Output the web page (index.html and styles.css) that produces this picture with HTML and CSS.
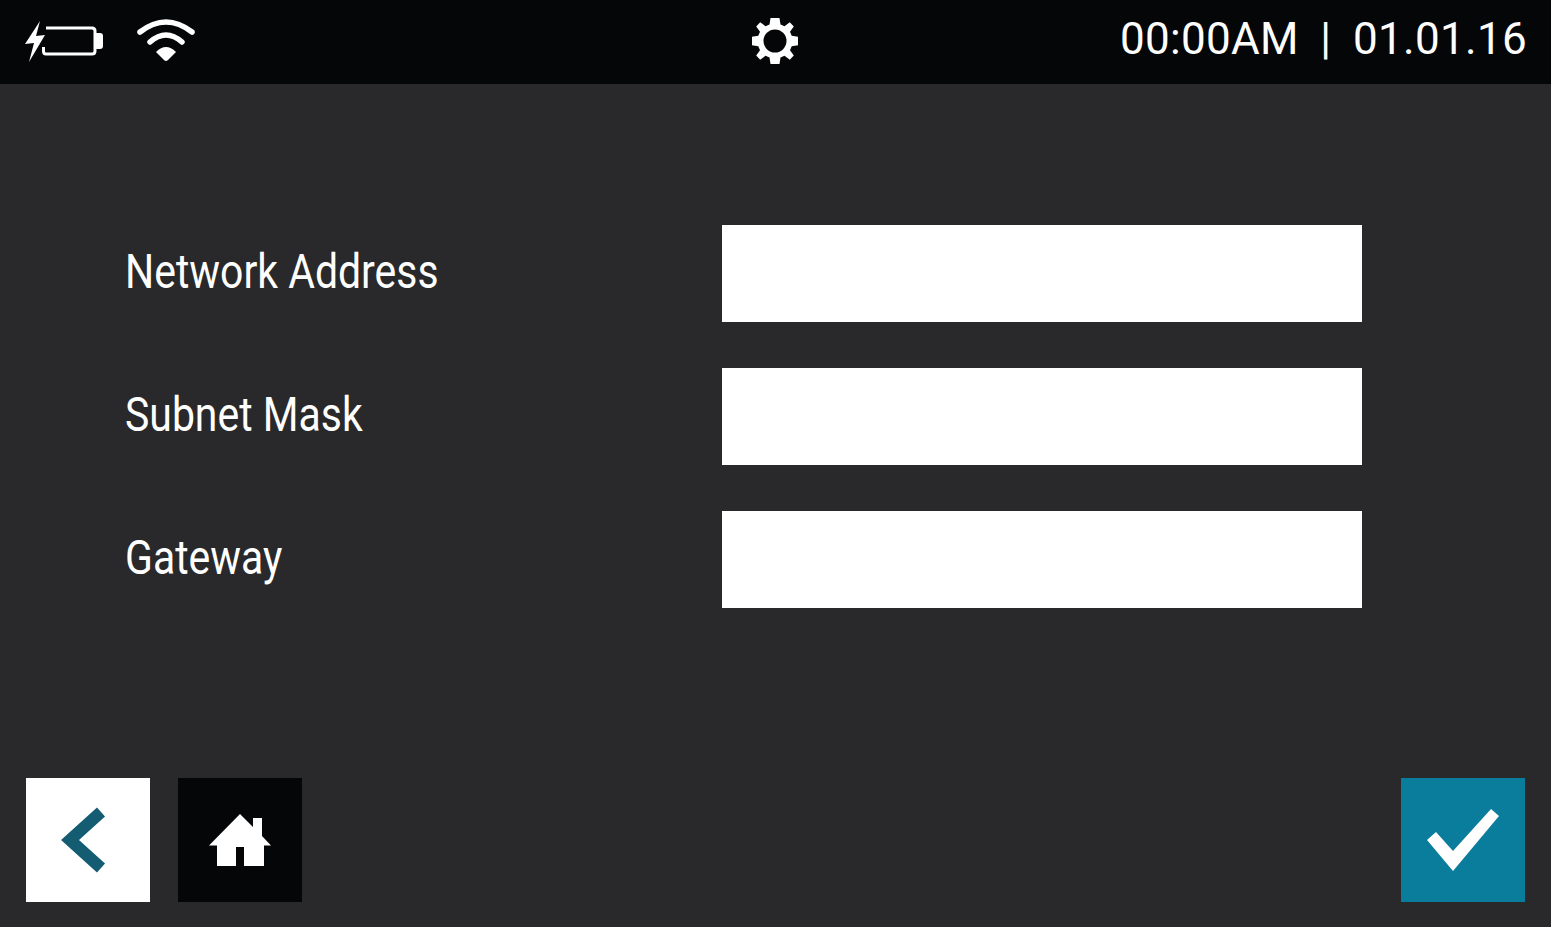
FILE: index.html
```html
<!DOCTYPE html>
<html lang="en">
<head>
    <meta charset="UTF-8">
    <meta name="viewport" content="width=device-width, initial-scale=1.0">
    <title>Network settings</title>
    <link rel="stylesheet" href="styles.css">
</head>
<body>
    <header class="topbar">
        <div class="status">
            <svg class="icon-battery" width="80" height="44" viewBox="0 0 80 44">
                <path d="M15 1 L0 24 L9 23 L4 42 L20 15 L11 16 Z" fill="#fff"/>
                <path d="M21 8 H67 Q70 8 70 11 V31 Q70 34 67 34 H21 Q18.500 34 18.500 31 V27" fill="none" stroke="#fff" stroke-width="3"/>
                <path d="M71 13 H75 Q78 13 78 16 V26 Q78 29 75 29 H71 Z" fill="#fff"/>
            </svg>
            <svg class="icon-wifi" width="60" height="44" viewBox="0 0 60 44">
                <path d="M3 14 Q29 -6 55 14" fill="none" stroke="#fff" stroke-width="5.500" stroke-linecap="round"/>
                <path d="M13 24 Q29 10 45 24" fill="none" stroke="#fff" stroke-width="5.500" stroke-linecap="round"/>
                <path d="M19 34 Q29 24 39 34 L31 42 Q29 44 27 42 Z" fill="#fff"/>
            </svg>
        </div>
        <svg class="icon-gear" width="48" height="48" viewBox="0 0 48 48">
            <path fill="#fff" fill-rule="evenodd" d="M19.500 1 H28.500 L29.500 7.500 L33.500 9.200 L38.800 5.200 L42.800 9.500 L39 14.800 L40.700 18.800 L47 19.800 V28.200 L40.700 29.200 L39 33.200 L42.800 38.500 L38.800 42.800 L33.500 38.800 L29.500 40.500 L28.500 47 H19.500 L18.500 40.500 L14.500 38.800 L9.200 42.800 L5.200 38.500 L9 33.200 L7.300 29.200 L1 28.200 V19.800 L7.300 18.800 L9 14.800 L5.200 9.500 L9.200 5.200 L14.500 9.200 L18.500 7.500 Z M24 12.500 A11.500 11.500 0 1 0 24 35.500 A11.500 11.500 0 1 0 24 12.500 Z"/>
        </svg>
        <div class="clock">00:00AM&nbsp; | &nbsp;01.01.16</div>
    </header>

    <main class="form">
        <div class="row">
            <label class="label"><span>Network Address</span></label>
            <div class="field"></div>
        </div>
        <div class="row">
            <label class="label"><span>Subnet Mask</span></label>
            <div class="field"></div>
        </div>
        <div class="row">
            <label class="label"><span>Gateway</span></label>
            <div class="field"></div>
        </div>
    </main>

    <footer class="actions">
        <div class="nav">
            <button class="btn btn-back">
                <svg width="124" height="124" viewBox="0 0 124 124">
                    <path d="M75 34 L44 62 L75 90" fill="none" stroke="#135c72" stroke-width="12"/>
                </svg>
            </button>
            <button class="btn btn-home">
                <svg width="124" height="124" viewBox="0 0 124 124">
                    <path fill="#fff" d="M62 36 L75 49 V40 H84 V58 L93 67.500 H86 V88 H66 V69 H58 V88 H39 V67.500 H31 Z"/>
                </svg>
            </button>
        </div>
        <button class="btn btn-ok">
            <svg width="124" height="124" viewBox="0 0 124 124">
                <path fill="#fff" d="M26 62 L35 54 L52 73 L90 31 L98 38 L52 93 Z"/>
            </svg>
        </button>
    </footer>
</body>
</html>
```

FILE: styles.css
```css
*{box-sizing: border-box;}
html,body{margin: 0;height: 100%;}
body{width: 1551px;height: 927px;background: #29292b;overflow: hidden;display: flex;flex-direction: column;font-family: "Roboto", "Liberation Sans", sans-serif;color: #fff;}

.topbar{height: 84px;background: #050608;display: grid;grid-template-columns: 1fr auto 1fr;align-items: center;padding: 0 24px 0 25px;}
.status{display: flex;align-items: center;gap: 32px;}
.icon-battery{margin-top: -1px;}
.icon-wifi{margin-top: -4px;}
.icon-gear{margin: -2px 3px 0 0;}
.clock{justify-self: end;font-size: 44px;font-weight: 400;letter-spacing: 0.3px;word-spacing: -0.4px;white-space: nowrap;margin-top: -6px;}

.form{display: flex;flex-direction: column;gap: 46px;padding: 141px 189px 0 125px;}
.row{display: flex;justify-content: space-between;align-items: center;height: 97px;}
.label{font-size: 48px;white-space: nowrap;margin-top: -4px;}
.label span{display: inline-block;transform: scaleX(0.853);transform-origin: left center;}
.field{width: 640px;height: 97px;background: #fff;}

.actions{margin-top: auto;display: flex;justify-content: space-between;padding: 0 26px 25px;}
.nav{display: flex;gap: 28px;}
.btn{width: 124px;height: 124px;border: 0;padding: 0;display: block;}
.btn svg{display: block;}
.btn-back{background: #fff;}
.btn-home{background: #050608;}
.btn-ok{background: #0a7d9c;}
```
